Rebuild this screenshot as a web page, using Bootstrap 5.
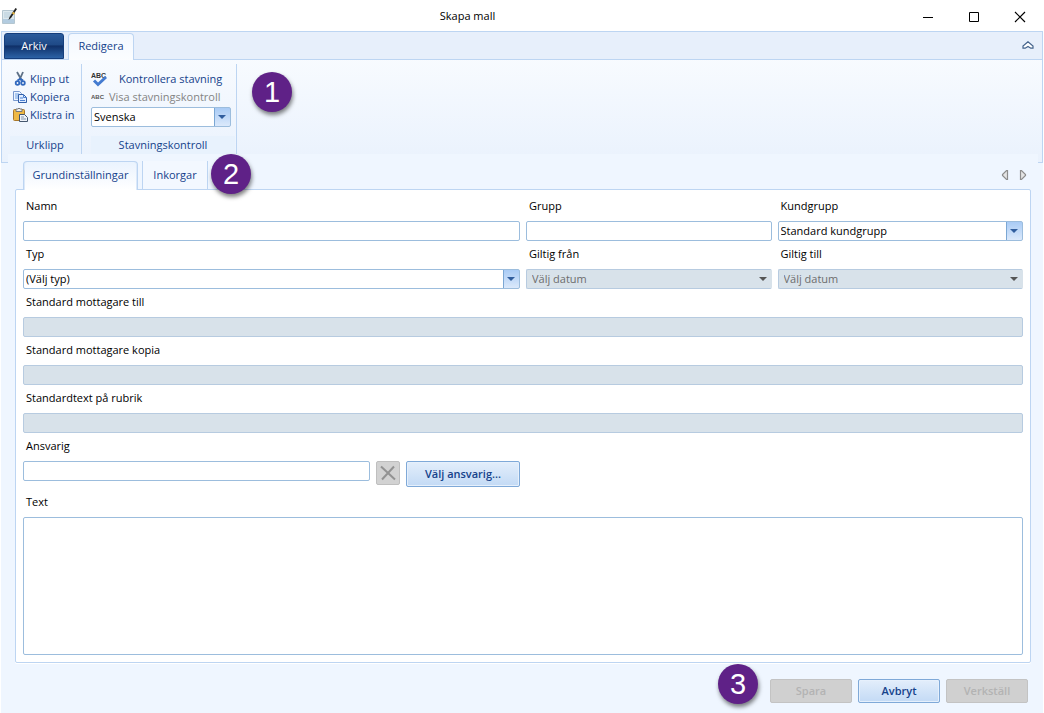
<!DOCTYPE html>
<html lang="sv">
<head>
<meta charset="utf-8">
<meta name="viewport" content="width=device-width, initial-scale=1">
<title>Skapa mall</title>
<link href="https://cdn.jsdelivr.net/npm/bootstrap@5.3.0/dist/css/bootstrap.min.css" rel="stylesheet">
<style>
:root { --ink: #15428b; --line: #bdd5f2; --edge: #9cbddd; }
body { font: 11px/18px "Open Sans", "Noto Sans", sans-serif; color: #000; background: #fff; }
.app-window { background: #eff6ff; margin: 0 1px; padding-bottom: 10px; }
.titlebar { height: 31px; background: #fff; margin: 0 -1px; padding: 0 1px 0 2px; }
.titlebar-title { padding-left: 12px; }
.winctl { width: 46px; height: 31px; border: 0; background: none; padding: 0; }
.ribbon { border: 1px solid var(--line); height: 132px; background: linear-gradient(#fbfdff, #eaf2fd); }
.ribbon-tabs { height: 28px; background: #e7effb; border-bottom: 1px solid var(--line); padding: 1px 8px 0 2px; }
.file-tab { width: 60px; height: 26px; border: 1px solid #153e7c; border-radius: 3px 3px 0 0; padding: 0; color: #fff; background: linear-gradient(#2c5c9c, #1f4a87 45%, #0f3068 50%, #2c62a5); }
.edit-tab { height: 27px; width: 66px; margin-left: 4px; border: 1px solid var(--line); border-bottom: 0; border-radius: 4px 4px 0 0; padding: 0 0 2px; background: linear-gradient(#f3f8ff, #fbfdff); color: var(--ink); }
.collapse-btn { border: 0; background: none; padding: 0; line-height: 0; }
.tool-group { margin-top: 4px; height: 90px; border-right: 1px solid var(--line); padding-top: 6px; }
.group-clip { width: 80px; padding-left: 8px; }
.group-clip .tool { padding-left: 2px; }
.group-spell { width: 155px; padding-left: 9px; }
.group-caption { height: 18px; background: #e8f2fd; color: var(--ink); text-align: center; margin-right: 1px; }
.tool { display: flex; align-items: center; height: 18px; border: 0; padding: 0; background: none; color: var(--ink); text-align: left; }
.tool:disabled { color: #848484; }
.tool svg { flex: none; }
.language { padding: 1px 5px 0 0; }
.step { width: 40px; height: 40px; border-radius: 50%; background: #5f2187; color: #fff; font: 29px/40px "Liberation Sans", Arial, sans-serif; text-align: center; box-shadow: 1px 3px 4px rgba(0,0,0,.5); flex: none; }
.step-ribbon { margin: 12px 0 0 15px; }
.step-tabs { margin: -7px 0 0 3px; z-index: 1; }
.workspace { background: #eff6ff; margin: -9px 5px 0 7px; padding: 7px 7px 0 7px; }
.page-tabs { height: 28px; padding-left: 8px; }
.page-tab { border: 0; color: var(--ink); background: #f3f8ff; height: 28px; padding: 0; }
.page-tab-on { width: 115px; height: 29px; border: 1px solid var(--line); border-bottom: 0; padding-bottom: 2px; box-shadow: inset 1px 0 #dce9f9, inset -1px 0 #dce9f9; border-radius: 4px 4px 0 0; background: linear-gradient(#eaf3fe, #fff); z-index: 1; }
.page-tab-off { width: 66px; margin-left: 4px; border: solid var(--line); border-width: 0 1px; }
.page-arrows { margin: 8px 3px 0 0; line-height: 0; }
.page-arrows button { border: 0; background: none; padding: 0; width: 10px; }
.sheet { background: #fff; border: 1px solid var(--line); border-radius: 2px; padding: 3px 7px 7px; box-shadow: 0 1px #fff; }
.fields { --bs-gutter-x: 6px; }
.field-label { display: block; height: 28px; line-height: 26px; padding-left: 3px; }
.form-control.box, .form-select.box { height: 20px; min-height: 0; border: 1px solid var(--edge); border-radius: 2px; padding: 0 3px; font-size: 11px; line-height: 18px; color: #000; box-shadow: none; }
.form-select.box { padding: 0 18px 0 2px; background: #fff url("data:image/svg+xml,%3Csvg xmlns='http://www.w3.org/2000/svg' width='16' height='18'%3E%3Cdefs%3E%3ClinearGradient id='g' x2='0' y2='1'%3E%3Cstop stop-color='%23a9cbf5'/%3E%3Cstop offset='1' stop-color='%23dbe9fb'/%3E%3C/linearGradient%3E%3C/defs%3E%3Cpath fill='url(%23g)' d='M0 0h16v18H0z'/%3E%3Cpath stroke='%237ba7d4' d='M.5 0v18'/%3E%3Cpath fill='%23315e9e' d='M4 7h8l-4 4z'/%3E%3C/svg%3E") no-repeat right center / 16px 18px; }
.form-control.box:disabled { background: #d8e2ea; border-color: #b7cbe0; }
.form-select.box:disabled { padding-left: 5px; color: #6d6d6d; border-color: #b7cbe0 #d8e2ea #b7cbe0 #b7cbe0; background: #d8e2ea url("data:image/svg+xml,%3Csvg xmlns='http://www.w3.org/2000/svg' width='16' height='18'%3E%3Cpath fill='%23555' d='M4 7h8l-4 4z'/%3E%3C/svg%3E") no-repeat right center / 16px 18px; }
.form-control.message { min-height: 138px; resize: none; }
.owner-row { gap: 6px; padding-bottom: 2px; }
.clear-btn { width: 24px; height: 24px; padding: 0; border: 1px solid #bfbfbf; border-radius: 2px; background: #d2d2d2; line-height: 0; flex: none; }
.push { --bs-btn-padding-y: 0; --bs-btn-padding-x: 0; --bs-btn-font-size: 11px; --bs-btn-line-height: 18px; --bs-btn-font-weight: 600; --bs-btn-border-radius: 2px; --bs-btn-color: #15428b; --bs-btn-border-color: #7fa9d8; --bs-btn-disabled-color: #b3b3b3; --bs-btn-disabled-border-color: #c3c3c3; --bs-btn-disabled-opacity: 1; width: 82px; height: 24px; background: linear-gradient(#e3eefb, #c3daf5); box-shadow: inset 0 0 0 1px #e6f0fc; }
.push:disabled { background: #d0d0d0; box-shadow: none; }
.push-wide { width: 114px; height: 26px; flex: none; }
.actions { gap: 6px; padding: 16px 15px 0 0; }
.step-actions { margin: -15px 6px -1px 0; }
</style>
</head>
<body>
<div class="app-window min-vh-100 d-flex flex-column">
  <header class="titlebar d-flex align-items-center">
    <svg width="16" height="18" viewBox="0 0 16 18"><path d="M.5 3.500h12v13H.5z" fill="#dce8ee" stroke="#b4c6d0"/><path d="M2 6h8M2 8h7M2 10h6" stroke="#b7cdda"/><path d="M1 12h11v4H1z" fill="#b3cce0"/><path d="m13.500 1-6 9-1 3 2.500-2 6-9z" fill="#222"/><path d="m10.500 5.500 2 1.500" stroke="#e3b340" stroke-width="2"/></svg>
    <div class="titlebar-title flex-grow-1 text-center">Skapa mall</div>
    <button class="winctl" type="button" aria-label="Minimera"><svg width="12" height="12"><path d="M1 6.500h10" stroke="#000"/></svg></button>
    <button class="winctl" type="button" aria-label="Maximera"><svg width="12" height="12"><path d="M1.500 1.500h9v9h-9z" fill="none" stroke="#000"/></svg></button>
    <button class="winctl" type="button" aria-label="Stäng"><svg width="12" height="12"><path d="m1 1 10 10M11 1 1 11" stroke="#000" stroke-width="1.200"/></svg></button>
  </header>

  <section class="ribbon">
    <nav class="ribbon-tabs d-flex align-items-start">
      <button class="file-tab" type="button">Arkiv</button>
      <button class="edit-tab" type="button">Redigera</button>
      <button class="collapse-btn ms-auto mt-2" type="button" aria-label="Minimera menyfliksområdet"><svg width="12" height="9"><path d="M6 .8 1 5v2.200h2.200L6 5.500l2.800 1.700H11V5z" fill="#fff" stroke="#43638c" stroke-width="1.200"/></svg></button>
    </nav>
    <div class="d-flex align-items-start">
      <div class="tool-group group-clip d-flex flex-column">
        <button class="tool" type="button"><svg width="18" height="16" viewBox="0 0 18 16"><path d="m5 1 4.500 8M11 1 7.500 9" stroke="#5d7086" stroke-width="1.800" fill="none"/><path d="M5.500 9.500 8 8l3 1.500" stroke="#3269be" stroke-width="2" fill="none"/><circle cx="5.500" cy="12" r="1.800" fill="none" stroke="#3269be" stroke-width="1.800"/><circle cx="11" cy="12" r="1.800" fill="none" stroke="#3269be" stroke-width="1.800"/></svg>Klipp ut</button>
        <button class="tool" type="button"><svg width="18" height="16" viewBox="0 0 18 16"><path d="M1.500 2.500h6l2 2v7h-8z" fill="#eef5ff" stroke="#7999cf"/><path d="M3 5h4M3 7h4M3 9h4" stroke="#6d9ee0"/><path d="M6.500 5.500h5l3 3v5h-8z" fill="#e1edff" stroke="#315fa8"/><path d="M11.500 5.500v3h3M8 9h3M8 11.500h5" fill="none" stroke="#4b80d0"/></svg>Kopiera</button>
        <button class="tool" type="button"><svg width="18" height="16" viewBox="0 0 18 16"><rect x="1.500" y="2.500" width="11" height="11" rx="1" fill="#efb944" stroke="#a9782b"/><path d="M4 4.500V2h2l1-1 1 1h2v2.500z" fill="#eee" stroke="#777"/><path d="M7.500 7.500h5l3 3v4h-8z" fill="#eef2f8" stroke="#44566e"/><path d="M9 10h3M9 12h5" stroke="#8497ad"/></svg>Klistra in</button>
        <div class="group-caption mt-auto">Urklipp</div>
      </div>
      <div class="tool-group group-spell d-flex flex-column">
        <button class="tool" type="button"><svg width="28" height="18" viewBox="0 0 28 18"><text x="0" y="8" font-family="Liberation Sans" font-size="7" font-weight="bold" fill="#333">ABC</text><path d="m3 10.500 4 4 8-7.500" fill="none" stroke="#447bd0" stroke-width="3"/></svg>Kontrollera stavning</button>
        <button class="tool" type="button" disabled><svg width="18" height="18" viewBox="0 0 18 18"><text x="0" y="11" font-family="Liberation Sans" font-size="6" font-weight="bold" fill="#555">ABC</text></svg>Visa stavningskontroll</button>
        <div class="language"><select class="form-select box" aria-label="Språk"><option>Svenska</option></select></div>
        <div class="group-caption mt-auto">Stavningskontroll</div>
      </div>
      <div class="step step-ribbon">1</div>
    </div>
  </section>

  <main class="workspace flex-grow-1 d-flex flex-column">
    <div class="page-tabs d-flex align-items-start">
      <button class="page-tab page-tab-on position-relative" type="button">Grundinställningar</button>
      <button class="page-tab page-tab-off" type="button">Inkorgar</button>
      <div class="step step-tabs position-relative">2</div>
      <div class="page-arrows ms-auto d-flex gap-2">
        <button type="button" aria-label="Föregående flik"><svg width="8" height="12"><path d="M6.500 1.500v9H5.500l-4-4v-1l4-4z" fill="#e4e4e4" stroke="#8c8c8c" stroke-width="1.200"/></svg></button>
        <button type="button" aria-label="Nästa flik"><svg width="8" height="12"><path d="M1.500 1.500v9h1l4-4v-1l-4-4z" fill="#e4e4e4" stroke="#8c8c8c" stroke-width="1.200"/></svg></button>
      </div>
    </div>
    <form class="sheet flex-grow-1 d-flex flex-column" id="mall">
      <div class="row fields">
        <div class="col-6"><label class="field-label" for="namn">Namn</label><input class="form-control box" id="namn" type="text"></div>
        <div class="col-3"><label class="field-label" for="grupp">Grupp</label><input class="form-control box" id="grupp" type="text"></div>
        <div class="col-3"><label class="field-label" for="kund">Kundgrupp</label><select class="form-select box" id="kund"><option>Standard kundgrupp</option></select></div>
        <div class="col-6"><label class="field-label" for="typ">Typ</label><select class="form-select box" id="typ"><option>(Välj typ)</option></select></div>
        <div class="col-3"><label class="field-label" for="fran">Giltig från</label><select class="form-select box" id="fran" disabled><option>Välj datum</option></select></div>
        <div class="col-3"><label class="field-label" for="till">Giltig till</label><select class="form-select box" id="till" disabled><option>Välj datum</option></select></div>
        <div class="col-12"><label class="field-label" for="mott">Standard mottagare till</label><input class="form-control box" id="mott" type="text" disabled></div>
        <div class="col-12"><label class="field-label" for="kopia">Standard mottagare kopia</label><input class="form-control box" id="kopia" type="text" disabled></div>
        <div class="col-12"><label class="field-label" for="rubrik">Standardtext på rubrik</label><input class="form-control box" id="rubrik" type="text" disabled></div>
        <div class="col-6"><label class="field-label" for="ansv">Ansvarig</label>
          <div class="owner-row d-flex align-items-start">
            <input class="form-control box" id="ansv" type="text">
            <button class="clear-btn" type="button" aria-label="Rensa ansvarig" disabled><svg width="16" height="16"><path d="m1 1.500 14 13M14 1.500 2 14.500" stroke="#929292" stroke-width="2"/></svg></button>
            <button class="btn push push-wide" type="button">Välj ansvarig...</button>
          </div>
        </div>
      </div>
      <label class="field-label" for="text">Text</label>
      <textarea class="form-control box message flex-grow-1" id="text"></textarea>
    </form>
  </main>

  <footer class="actions d-flex justify-content-end align-items-start">
    <div class="step step-actions">3</div>
    <button class="btn push" type="submit" form="mall" disabled>Spara</button>
    <button class="btn push" type="button">Avbryt</button>
    <button class="btn push" type="button" disabled>Verkställ</button>
  </footer>
</div>
<script src="https://cdn.jsdelivr.net/npm/bootstrap@5.3.0/dist/js/bootstrap.bundle.min.js"></script>
</body>
</html>
